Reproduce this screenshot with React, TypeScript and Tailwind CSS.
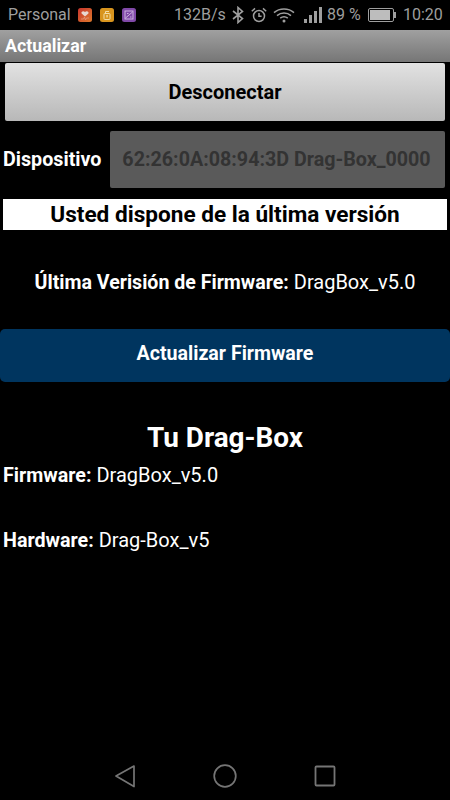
import React from "react";

const roboto = { fontFamily: "Roboto, sans-serif" };

function StatusBar() {
  return (
    <div className="h-[30px] bg-black flex items-center text-[#9e9e9e] text-[16px]">
      <span className="ml-2 w-[63px] whitespace-nowrap">Personal</span>
      {/* notification icons */}
      <div className="flex items-center gap-[8px] ml-[7px]">
        <svg width="14" height="14" viewBox="0 0 14 14">
          <defs>
            <linearGradient id="heart" x1="0" y1="0" x2="1" y2="1">
              <stop offset="0" stopColor="#c8352e" />
              <stop offset="1" stopColor="#dd7a2c" />
            </linearGradient>
          </defs>
          <rect width="14" height="14" rx="2.500" fill="url(#heart)" />
          <path d="M7 8.500 3.600 5.600C2.700 4 5 2.400 7 3.900 9 2.400 11.300 4 10.400 5.600Z" fill="#e8d8d0" />
          <path d="M3 11h2.500l1-2 1 3 1-2H11" stroke="#e8a088" strokeWidth="0.700" fill="none" />
        </svg>
        <svg width="14" height="14" viewBox="0 0 14 14">
          <rect width="14" height="14" rx="2.500" fill="#d8951e" />
          <rect x="4" y="5.500" width="6" height="6" rx="0.800" fill="none" stroke="#f3dfa8" strokeWidth="1" />
          <path d="M5.500 5.500V3.500h3.500" stroke="#f3dfa8" strokeWidth="1" fill="none" />
          <rect x="6.400" y="7" width="1.300" height="2.500" fill="#f3dfa8" />
        </svg>
        <svg width="14" height="14" viewBox="0 0 14 14">
          <rect width="14" height="14" rx="2.500" fill="#8049a8" />
          <rect x="3" y="3" width="8" height="8" fill="none" stroke="#d6c0e6" strokeWidth="0.900" />
          <path d="M3.500 10 10.500 4M5 5.500h1.500M8 9h1.500" stroke="#d6c0e6" strokeWidth="0.900" fill="none" />
        </svg>
      </div>
      <span className="ml-[38px] w-[51px] whitespace-nowrap">132B/s</span>
      {/* bluetooth */}
      <svg className="ml-[7px]" width="12" height="18" viewBox="0 0 12 18" fill="none" stroke="#9e9e9e" strokeWidth="1.600">
        <path d="M1 5 10.500 12.500 6 16.500V1.500L10.500 5.500 1 13" />
      </svg>
      {/* alarm */}
      <svg className="ml-[7px]" width="16" height="16" viewBox="0 0 16 16" fill="none" stroke="#9e9e9e" strokeWidth="1.500">
        <circle cx="8" cy="9" r="5.500" />
        <path d="M8 6v3.200h2.600M.8 4.200 4 1.400M15.200 4.200 12 1.400" />
      </svg>
      {/* wifi */}
      <svg className="ml-[6px]" width="22" height="16" viewBox="0 0 22 16" fill="none" stroke="#9e9e9e" strokeWidth="1.500">
        <path d="M1 5.600C6.500.7 15.500.7 21 5.600M4 8.600c4-3.400 10-3.400 14 0M7.200 11.200c2.200-1.700 5.400-1.700 7.600 0" />
        <circle cx="11" cy="14" r="1.500" fill="#9e9e9e" stroke="none" />
      </svg>
      {/* signal */}
      <div className="ml-[9px] flex items-end gap-[2px] h-[16px]">
        <div className="w-[3px] h-[4px] bg-[#9e9e9e]" />
        <div className="w-[3px] h-[8px] bg-[#9e9e9e]" />
        <div className="w-[3px] h-[12px] bg-[#9e9e9e]" />
        <div className="w-[3px] h-[16px] bg-[#9e9e9e]" />
      </div>
      <span className="ml-[5px] w-[36px] whitespace-nowrap">89 %</span>
      {/* battery */}
      <div className="ml-[5px] flex items-center">
        <div className="w-[26px] h-[14px] border border-[#9e9e9e] rounded-[2px] p-[1px]">
          <div className="h-full w-[89%] bg-[#bdbdbd]" />
        </div>
        <div className="w-[2px] h-[6px] bg-[#9e9e9e]" />
      </div>
      <span className="ml-[7px]">10:20</span>
    </div>
  );
}

function App() {
  return (
    <div className="w-[450px] h-[800px] bg-black flex flex-col overflow-hidden" style={roboto}>
      <StatusBar />

      {/* Title bar */}
      <div className="h-[32px] bg-gradient-to-b from-[#a0a0a0] to-[#767676] pl-[5px] pt-[5px] text-white font-bold text-[17.800px] leading-[22px]">
        Actualizar
      </div>

      <div className="flex flex-col flex-1">
        <div className="px-[5px] pt-[1px]">
          <button className="w-full h-[58px] rounded-[2px] bg-gradient-to-b from-[#e2e2e2] to-[#b8b8b8] text-black font-bold text-[20px]">
            Desconectar
          </button>
        </div>

        {/* Device row */}
        <div className="flex items-center justify-between pl-[3px] pr-[5px] mt-[10px]">
          <span className="text-white font-bold text-[19.700px]">Dispositivo</span>
          <div className="w-[335px] h-[57px] rounded-[2px] bg-[#5a5a5a] flex items-center justify-center pr-[2px] text-[#333333] font-bold text-[19.700px]">
            62:26:0A:08:94:3D Drag-Box_0000
          </div>
        </div>

        <div className="mx-[3px] mt-[11px] h-[31px] bg-white text-black font-bold text-[22.600px] flex items-center justify-center">
          Usted dispone de la última versión
        </div>

        <div className="mt-[40px] h-[24px] text-center text-white text-[20px] leading-[24px]">
          <span className="font-bold text-[19.600px]">Última Verisión de Firmware:</span> DragBox_v5.0
        </div>

        <button className="mt-[35px] h-[53px] w-full rounded-[5px] bg-[#00355f] text-white font-bold text-[19.600px] pb-[3px]">
          Actualizar Firmware
        </button>

        <div className="mt-[39px] text-center text-white font-bold text-[27.900px] leading-[34px]">Tu Drag-Box</div>

        <div className="mt-[8px] h-[24px] pl-[3px] text-white text-[20px] leading-[24px]">
          <span className="font-bold text-[19.700px]">Firmware:</span> DragBox_v5.0
        </div>
        <div className="mt-[41px] h-[24px] pl-[3px] text-white text-[20px] leading-[24px]">
          <span className="font-bold text-[19.700px]">Hardware:</span> Drag-Box_v5
        </div>

        {/* Nav bar */}
        <div className="mt-auto h-[48px] flex items-center justify-center gap-[77px]">
          <svg width="22" height="24" viewBox="0 0 22 24" fill="none" stroke="#757575" strokeWidth="1.700" strokeLinejoin="round">
            <path d="M20 2 2 12l18 10.500Z" />
          </svg>
          <svg width="24" height="24" viewBox="0 0 24 24" fill="none" stroke="#757575" strokeWidth="1.700">
            <circle cx="12" cy="12" r="10.800" />
          </svg>
          <svg width="22" height="22" viewBox="0 0 22 22" fill="none" stroke="#757575" strokeWidth="1.800" strokeLinejoin="round">
            <rect x="1.500" y="1.500" width="19" height="19" rx="1" />
          </svg>
        </div>
      </div>
    </div>
  );
}

export default App;
